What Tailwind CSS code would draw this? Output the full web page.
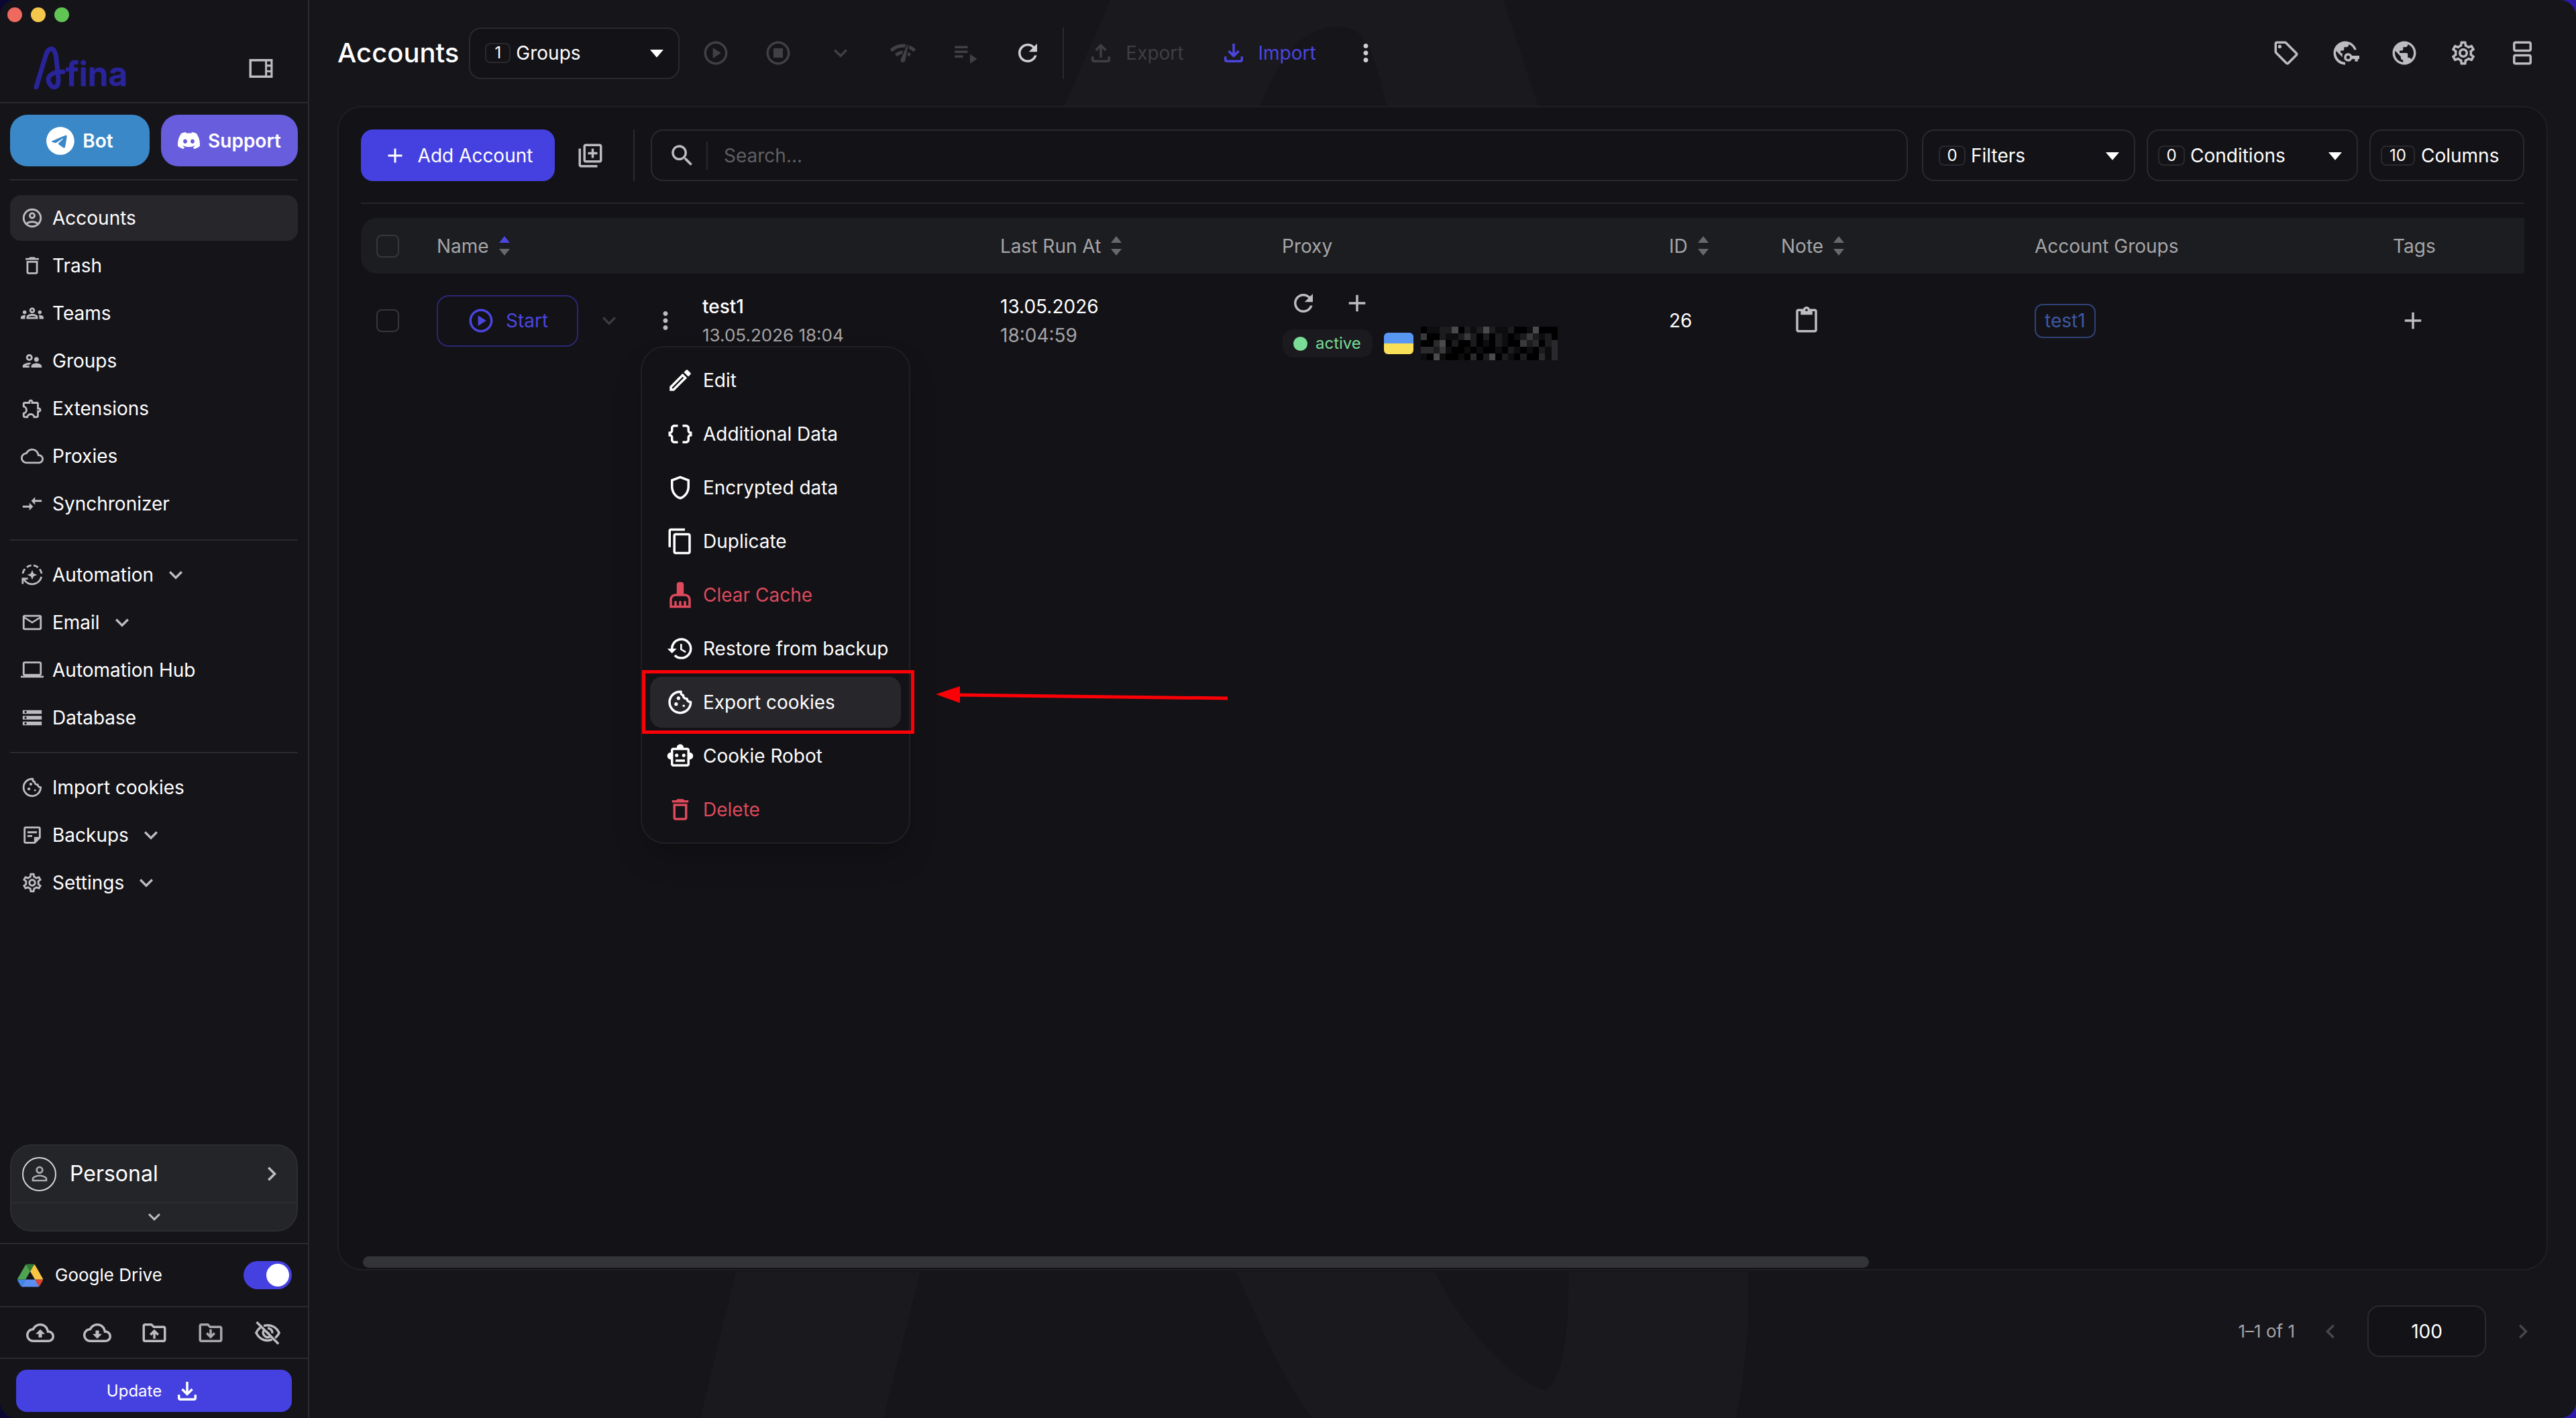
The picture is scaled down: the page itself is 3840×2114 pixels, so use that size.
<!DOCTYPE html>
<html lang="en">
<head>
    <meta charset="UTF-8">
    <meta name="viewport" content="width=device-width, initial-scale=1.0">
    <title>Afina - Accounts</title>
    <script src="https://cdn.jsdelivr.net/npm/@tailwindcss/browser@4"></script>
</head>
<body class="bg-linear-to-r from-[#0b0733] to-[#2c1ba8] font-['Inter',sans-serif] text-[28px] leading-[40px] text-white">

    <!-- Icon sprite -->
    <svg class="hidden" xmlns="http://www.w3.org/2000/svg">
        <symbol id="i-panel" viewBox="0 0 24 24"><path fill-rule="evenodd" d="M2 4h20v16H2zM4 6v12h11.500V6zM17.200 6v2.700h3V6zm0 4.500v3h3v-3zm0 4.800V18h3v-2.700z"/></symbol>
        <symbol id="i-telegram" viewBox="0 0 24 24"><path d="M12 2C6.480 2 2 6.480 2 12s4.480 10 10 10 10-4.480 10-10S17.520 2 12 2zm4.640 6.800c-.15 1.580-.8 5.420-1.130 7.190-.14.75-.42 1-.68 1.030-.58.05-1.020-.38-1.580-.75-.88-.58-1.380-.94-2.230-1.500-.99-.65-.35-1.010.22-1.590.15-.15 2.710-2.480 2.760-2.690.01-.03.01-.12-.05-.18-.06-.05-.14-.03-.21-.02-.09.02-1.490.95-4.220 2.790-.4.27-.76.41-1.080.4-.36-.01-1.040-.2-1.550-.37-.63-.2-1.120-.31-1.080-.66.02-.18.27-.36.74-.55 2.920-1.270 4.860-2.110 5.830-2.510 2.780-1.160 3.350-1.360 3.730-1.360.08 0 .27.02.39.12.1.08.13.19.14.27-.01.06.01.24 0 .38z"/></symbol>
        <symbol id="i-discord" viewBox="0 0 24 24"><path d="M20.317 4.370a19.791 19.791 0 0 0-4.885-1.515.074.074 0 0 0-.079.037c-.211.375-.445.865-.608 1.250-1.845-.276-3.680-.276-5.487 0-.164-.393-.406-.874-.618-1.250a.077.077 0 0 0-.079-.037 19.736 19.736 0 0 0-4.885 1.515.07.07 0 0 0-.032.028C.533 9.046-.319 13.580.099 18.058a.082.082 0 0 0 .031.056c2.053 1.508 4.041 2.423 5.993 3.029a.078.078 0 0 0 .084-.028c.462-.63.873-1.295 1.226-1.994a.076.076 0 0 0-.042-.106c-.653-.248-1.274-.55-1.872-.892a.077.077 0 0 1-.008-.128c.126-.094.252-.192.372-.291a.074.074 0 0 1 .078-.011c3.928 1.793 8.180 1.793 12.061 0a.074.074 0 0 1 .079.01c.12.099.246.198.373.292a.077.077 0 0 1-.007.128 12.299 12.299 0 0 1-1.873.891.077.077 0 0 0-.041.107c.36.698.772 1.363 1.225 1.993a.076.076 0 0 0 .084.029c1.961-.607 3.950-1.522 6.002-3.029a.077.077 0 0 0 .031-.055c.5-5.177-.838-9.674-3.549-13.660a.061.061 0 0 0-.031-.029zM8.020 15.331c-1.183 0-2.157-1.086-2.157-2.419s.956-2.419 2.157-2.419c1.211 0 2.176 1.095 2.157 2.419 0 1.333-.956 2.419-2.157 2.419zm7.975 0c-1.183 0-2.157-1.086-2.157-2.419s.955-2.419 2.157-2.419c1.211 0 2.176 1.095 2.157 2.419 0 1.333-.946 2.419-2.157 2.419z"/></symbol>
        <symbol id="i-account" viewBox="0 0 24 24"><g fill="none" stroke="currentColor" stroke-width="2"><circle cx="12" cy="12" r="9"/><circle cx="12" cy="9.500" r="2.500"/><path d="M5.600 18.200c3.800-2.900 9-2.900 12.800 0"/></g></symbol>
        <symbol id="i-trash" viewBox="0 0 24 24"><path d="M6 19c0 1.100.9 2 2 2h8c1.100 0 2-.9 2-2V7H6v12zM8 9h8v10H8V9zm7.500-5-1-1h-5l-1 1H5v2h14V4z"/></symbol>
        <symbol id="i-teams" viewBox="0 0 24 24"><path d="M4 13c1.100 0 2-.9 2-2s-.9-2-2-2-2 .9-2 2 .9 2 2 2zm1.130 1.100c-.37-.06-.74-.1-1.130-.1-.99 0-1.930.21-2.780.58C.48 14.900 0 15.620 0 16.430V18h4.500v-1.610c0-.83.23-1.610.63-2.290zM20 13c1.100 0 2-.9 2-2s-.9-2-2-2-2 .9-2 2 .9 2 2 2zm4 3.430c0-.81-.48-1.530-1.220-1.850-.85-.37-1.790-.58-2.780-.58-.39 0-.76.04-1.130.1.4.68.63 1.460.63 2.290V18H24v-1.570zm-7.760-2.780c-1.170-.52-2.610-.9-4.240-.9-1.630 0-3.070.39-4.240.9C6.680 14.130 6 15.210 6 16.390V18h12v-1.610c0-1.180-.68-2.260-1.760-2.740zM8.070 16c.09-.23.13-.39.91-.69.97-.38 1.990-.56 3.020-.56s2.050.18 3.020.56c.77.3.81.46.91.69H8.070zM12 8c.55 0 1 .45 1 1s-.45 1-1 1-1-.45-1-1 .45-1 1-1m0-2c-1.660 0-3 1.340-3 3s1.340 3 3 3 3-1.340 3-3-1.340-3-3-3z"/></symbol>
        <symbol id="i-groups" viewBox="0 0 24 24"><path d="M9 12c1.930 0 3.500-1.570 3.500-3.500S10.930 5 9 5 5.500 6.570 5.500 8.500 7.070 12 9 12zm0-5c.83 0 1.500.67 1.500 1.500S9.830 10 9 10s-1.500-.67-1.500-1.500S8.170 7 9 7zm.05 10H4.770c.99-.5 2.700-1 4.230-1 .11 0 .23.01.34.01.34-.73.93-1.330 1.640-1.810-.73-.13-1.420-.2-1.980-.2-2.340 0-7 1.170-7 3.500V19h7v-1.500c0-.17.02-.34.05-.5zm7.450-2.500c-1.840 0-5.500 1.010-5.500 3V19h11v-1.500c0-1.990-3.660-3-5.500-3zm1.210-1.820c.76-.43 1.290-1.240 1.290-2.180C19 9.120 17.880 8 16.500 8S14 9.120 14 10.500c0 .94.53 1.750 1.290 2.180.36.2.77.32 1.210.32s.85-.12 1.210-.32z"/></symbol>
        <symbol id="i-extension" viewBox="0 0 24 24"><path d="M10.500 4.500c.28 0 .5.22.5.5v2h6v6h2c.28 0 .5.22.5.5s-.22.5-.5.5h-2v6h-2.120c-.68-1.750-2.390-3-4.380-3s-3.700 1.250-4.380 3H4v-2.120c1.750-.68 3-2.390 3-4.380 0-1.990-1.240-3.700-2.990-4.380L4 7h6V5c0-.28.22-.5.5-.5m0-2C9.120 2.500 8 3.620 8 5H4c-1.100 0-1.990.9-1.990 2v3.800h.29c1.490 0 2.700 1.210 2.700 2.700s-1.210 2.700-2.700 2.700H2V20c0 1.100.9 2 2 2h3.800v-.3c0-1.490 1.210-2.700 2.700-2.700s2.700 1.210 2.700 2.700v.3H17c1.100 0 2-.9 2-2v-4c1.380 0 2.500-1.120 2.500-2.500S20.380 11 19 11V7c0-1.100-.9-2-2-2h-4c0-1.380-1.120-2.500-2.500-2.500z"/></symbol>
        <symbol id="i-cloud" viewBox="0 0 24 24"><path d="M19.350 10.040C18.670 6.590 15.640 4 12 4 9.110 4 6.600 5.640 5.350 8.040 2.340 8.360 0 10.910 0 14c0 3.310 2.690 6 6 6h13c2.760 0 5-2.240 5-5 0-2.640-2.050-4.780-4.650-4.960zM19 18H6c-2.210 0-4-1.790-4-4 0-2.050 1.530-3.760 3.560-3.970l1.070-.11.5-.95C8.080 7.140 9.940 6 12 6c2.620 0 4.880 1.860 5.390 4.430l.3 1.500 1.530.11c1.560.1 2.780 1.410 2.780 2.960 0 1.650-1.350 3-3 3z"/></symbol>
        <symbol id="i-sync" viewBox="0 0 24 24"><path d="M9.010 14H2v2h7.010v3L13 15l-3.990-4v3zm5.980-1v-3H22V8h-7.010V5L11 9l3.990 4z"/></symbol>
        <symbol id="i-automation" viewBox="0 0 24 24"><g fill="none" stroke="currentColor" stroke-width="2"><path d="M21.700 14A10 10 0 0 1 3.300 16.800M2.100 10.700A10 10 0 0 1 4.300 5.800M6.300 3.900A10 10 0 0 1 11 2M13.400 2A10 10 0 0 1 18.200 4.200M19.900 6A10 10 0 0 1 21.900 10.700"/><path d="M2 21.500V16h5.500"/></g><path d="m12 6.800 1.500 3.700 3.700 1.500-3.700 1.500L12 17.200l-1.500-3.700L6.800 12l3.700-1.500z"/></symbol>
        <symbol id="i-mail" viewBox="0 0 24 24"><path d="M22 6c0-1.100-.9-2-2-2H4c-1.100 0-2 .9-2 2v12c0 1.100.9 2 2 2h16c1.100 0 2-.9 2-2V6zm-2 0-8 5-8-5h16zm0 12H4V8l8 5 8-5v10z"/></symbol>
        <symbol id="i-laptop" viewBox="0 0 24 24"><path d="M20 18c1.100 0 1.990-.9 1.990-2L22 5c0-1.100-.9-2-2-2H4c-1.100 0-2 .9-2 2v11c0 1.100.9 2 2 2H0v2h24v-2h-4zM4 5h16v11H4V5z"/></symbol>
        <symbol id="i-storage" viewBox="0 0 24 24"><path d="M2 20h20v-4H2v4zm2-3h2v2H4v-2zM2 4v4h20V4H2zm4 3H4V5h2v2zm-4 7h20v-4H2v4zm2-3h2v2H4v-2z"/></symbol>
        <symbol id="i-cookie" viewBox="0 0 24 24"><path fill="none" stroke="currentColor" stroke-width="2" stroke-linejoin="round" d="M12.600 3a9 9 0 1 0 8.300 8.700c-1.700.1-3.100-.9-3.100-2.700-2 .2-3.300-1.100-3.200-2.900-1.500-.3-2.300-1.600-2-3.100z"/><circle cx="10.500" cy="8.500" r="1.500"/><circle cx="8.500" cy="13.500" r="1.500"/><circle cx="15" cy="15" r="1"/></symbol>
        <symbol id="i-backups" viewBox="0 0 24 24"><path fill-rule="evenodd" d="M5 3h14c1.100 0 2 .9 2 2v10l-6 6H5c-1.100 0-2-.9-2-2V5c0-1.100.9-2 2-2zm0 2v14h9v-5h5V5zM7 8h10v2H7zm0 4h5v2H7z"/></symbol>
        <symbol id="i-gear" viewBox="0 0 24 24"><path d="M19.430 12.980c.04-.32.07-.64.07-.98 0-.34-.03-.66-.07-.98l2.110-1.650c.19-.15.24-.42.12-.64l-2-3.460c-.09-.16-.26-.25-.44-.25-.06 0-.12.01-.17.03l-2.490 1c-.52-.4-1.080-.73-1.690-.98l-.38-2.650C14.460 2.180 14.250 2 14 2h-4c-.25 0-.46.18-.49.42l-.38 2.650c-.61.25-1.170.59-1.690.98l-2.490-1c-.06-.02-.12-.03-.18-.03-.17 0-.34.09-.43.25l-2 3.460c-.13.22-.07.49.12.64l2.110 1.650c-.04.32-.07.65-.07.98 0 .33.03.66.07.98l-2.110 1.650c-.19.15-.24.42-.12.64l2 3.460c.09.16.26.25.44.25.06 0 .12-.01.17-.03l2.490-1c.52.4 1.080.73 1.690.98l.38 2.650c.03.24.24.42.49.42h4c.25 0 .46-.18.49-.42l.38-2.650c.61-.25 1.170-.59 1.690-.98l2.490 1c.06.02.12.03.18.03.17 0 .34-.09.43-.25l2-3.460c.12-.22.07-.49-.12-.64l-2.110-1.650zm-1.980-1.710c.04.31.05.52.05.73 0 .21-.02.43-.05.73l-.14 1.130.89.7 1.080.84-.7 1.210-1.270-.51-1.040-.42-.9.68c-.43.32-.84.56-1.250.73l-1.060.43-.16 1.130-.2 1.350h-1.400l-.19-1.350-.16-1.130-1.060-.43c-.43-.18-.83-.41-1.230-.71l-.91-.7-1.060.43-1.270.51-.7-1.210 1.080-.84.89-.7-.14-1.130c-.03-.31-.05-.54-.05-.74s.02-.43.05-.73l.14-1.130-.89-.7-1.080-.84.7-1.210 1.270.51 1.040.42.9-.68c.43-.32.84-.56 1.250-.73l1.060-.43.16-1.130.2-1.350h1.390l.19 1.350.16 1.130 1.060.43c.43.18.83.41 1.230.71l.91.7 1.060-.43 1.270-.51.7 1.210-1.070.85-.89.7.14 1.130zM12 8c-2.210 0-4 1.790-4 4s1.790 4 4 4 4-1.790 4-4-1.790-4-4-4zm0 6c-1.100 0-2-.9-2-2s.9-2 2-2 2 .9 2 2-.9 2-2 2z"/></symbol>
        <symbol id="i-down" viewBox="0 0 24 24"><path d="M16.590 8.590 12 13.170 7.410 8.590 6 10l6 6 6-6z"/></symbol>
        <symbol id="i-right" viewBox="0 0 24 24"><path d="M10 6 8.590 7.410 13.170 12l-4.580 4.590L10 18l6-6z"/></symbol>
        <symbol id="i-left" viewBox="0 0 24 24"><path d="M15.410 7.410 14 6l-6 6 6 6 1.410-1.410L10.830 12z"/></symbol>
        <symbol id="i-person" viewBox="0 0 24 24"><path d="M12 5.900c1.160 0 2.100.94 2.100 2.100s-.94 2.100-2.100 2.100S9.900 9.160 9.900 8s.94-2.100 2.100-2.100m0 9c2.970 0 6.100 1.460 6.100 2.100v1.100H5.900V17c0-.64 3.130-2.100 6.100-2.100M12 4C9.790 4 8 5.790 8 8s1.790 4 4 4 4-1.790 4-4-1.790-4-4-4zm0 9c-2.670 0-8 1.340-8 4v3h16v-3c0-2.660-5.330-4-8-4z"/></symbol>
        <symbol id="i-drive" viewBox="0 0 87 78"><path fill="#4285e8" d="m6.600 66.850 3.850 6.650c.8 1.400 1.950 2.500 3.300 3.300l13.750-23.800h-27.500c0 1.550.4 3.100 1.200 4.500z"/><path fill="#4fa352" d="m43.650 25-13.750-23.800c-1.350.8-2.500 1.900-3.300 3.300l-25.400 44a9.060 9.060 0 0 0-1.200 4.500h27.500z"/><path fill="#d9432f" d="m73.550 76.800c1.350-.8 2.500-1.900 3.300-3.300l1.600-2.750 7.650-13.250c.8-1.400 1.200-2.950 1.200-4.500h-27.500l5.850 11.500z"/><path fill="#2f7d36" d="m43.650 25 13.750-23.800c-1.350-.8-2.900-1.200-4.500-1.200h-18.500c-1.600 0-3.150.45-4.500 1.200z"/><path fill="#5b8df0" d="m59.800 53h-32.300l-13.750 23.800c1.350.8 2.900 1.200 4.500 1.200h50.800c1.600 0 3.150-.45 4.500-1.200z"/><path fill="#f7c544" d="m73.400 26.500-12.700-22c-.8-1.400-1.950-2.500-3.300-3.300l-13.750 23.800 16.150 28h27.450c0-1.550-.4-3.100-1.200-4.500z"/></symbol>
        <symbol id="i-arrow-up" viewBox="0 0 24 24"><path d="M8 13h2.550v3h2.900v-3H16l-4-4z"/></symbol>
        <symbol id="i-arrow-down" viewBox="0 0 24 24"><path d="M13.450 10h-2.900v3H8l4 4 4-4h-2.550z"/></symbol>
        <symbol id="i-folder" viewBox="0 0 24 24"><path d="M20 6h-8l-2-2H4c-1.100 0-1.990.9-1.990 2L2 18c0 1.100.9 2 2 2h16c1.100 0 2-.9 2-2V8c0-1.100-.9-2-2-2zm0 12H4V6h5.170l2 2H20v10z"/></symbol>
        <symbol id="i-folder-up" viewBox="0 0 24 24"><use href="#i-folder"/><path d="m8 13 1.410 1.410L11 12.840V17h2v-4.160l1.590 1.580L16 13l-4-4z"/></symbol>
        <symbol id="i-folder-down" viewBox="0 0 24 24"><use href="#i-folder"/><path d="m16 13-1.410-1.410L13 13.160V9h-2v4.160l-1.590-1.580L8 13l4 4z"/></symbol>
        <symbol id="i-eye-off" viewBox="0 0 24 24"><g fill="none" stroke="currentColor" stroke-width="2"><path d="M18.400 16.300c1.400-1.100 2.600-2.600 3.400-4.300C20 8.200 16.300 5.500 12 5.500c-1.200 0-2.300.2-3.400.6M5.900 7.400C4.300 8.500 3 10.100 2.200 12 4 15.800 7.700 18.500 12 18.500c1.300 0 2.600-.3 3.800-.7"/><path d="M12 8a4 4 0 0 1 4 4.300M8.600 10a4 4 0 0 0 5.300 5.400M11 11l2.500 2.500"/><path d="m2.600 2.800 18.600 18.600"/></g></symbol>
        <symbol id="i-import" viewBox="0 0 24 24"><path d="M18 15v3H6v-3H4v3c0 1.100.9 2 2 2h12c1.100 0 2-.9 2-2v-3h-2zm-1-4-1.410-1.410L13 12.170V4h-2v8.170L8.410 9.590 7 11l5 5 5-5z"/></symbol>
        <symbol id="i-export" viewBox="0 0 24 24"><path d="M18 15v3H6v-3H4v3c0 1.100.9 2 2 2h12c1.100 0 2-.9 2-2v-3h-2zM7 9l1.410 1.410L11 7.830V16h2V7.830l2.590 2.580L17 9l-5-5-5 5z"/></symbol>
        <symbol id="i-caret" viewBox="0 0 24 24"><path d="M6 9h12l-6 7z"/></symbol>
        <symbol id="i-play" viewBox="0 0 24 24"><path d="M12 2C6.480 2 2 6.480 2 12s4.480 10 10 10 10-4.480 10-10S17.520 2 12 2zm0 18c-4.410 0-8-3.590-8-8s3.590-8 8-8 8 3.590 8 8-3.590 8-8 8zm-2.500-3.500 7-4.500-7-4.500z"/></symbol>
        <symbol id="i-stop" viewBox="0 0 24 24"><path d="M12 2C6.480 2 2 6.480 2 12s4.480 10 10 10 10-4.480 10-10S17.520 2 12 2zm0 18c-4.410 0-8-3.590-8-8s3.590-8 8-8 8 3.590 8 8-3.590 8-8 8zm4-4H8V8h8z"/></symbol>
        <symbol id="i-netcheck" viewBox="0 0 24 24"><path d="M15.900 5c-.17 0-.32.09-.41.23l-.07.15-5.180 11.650c-.16.29-.26.61-.26.96 0 1.110.9 2.010 2.010 2.010.96 0 1.770-.68 1.960-1.590l.01-.03L16.400 5.500c0-.28-.22-.5-.5-.5zM1 9l2 2c2.880-2.880 6.790-4.080 10.530-3.620l1.190-2.680C9.890 3.840 4.740 5.270 1 9zm20 2 2-2c-1.640-1.640-3.550-2.820-5.590-3.570l-.53 2.820c1.500.62 2.900 1.530 4.120 2.750zm-4 4 2-2c-.8-.8-1.700-1.420-2.660-1.890l-.55 2.920c.42.27.83.59 1.210.97zM5 13l2 2c1.130-1.130 2.560-1.790 4.030-2l1.280-2.880c-2.630-.08-5.300.87-7.310 2.880z"/></symbol>
        <symbol id="i-playlist" viewBox="0 0 24 24"><path d="M3 10h11v2H3zm0-4h11v2H3zm0 8h7v2H3zm13-1v8l6-4z"/></symbol>
        <symbol id="i-refresh" viewBox="0 0 24 24"><path d="M17.650 6.350C16.200 4.900 14.210 4 12 4c-4.420 0-7.990 3.580-7.990 8s3.570 8 7.990 8c3.730 0 6.840-2.550 7.730-6h-2.080c-.82 2.330-3.040 4-5.650 4-3.310 0-6-2.690-6-6s2.690-6 6-6c1.660 0 3.140.69 4.220 1.780L13 11h7V4z"/></symbol>
        <symbol id="i-more" viewBox="0 0 24 24"><path d="M12 8c1.100 0 2-.9 2-2s-.9-2-2-2-2 .9-2 2 .9 2 2 2zm0 2c-1.100 0-2 .9-2 2s.9 2 2 2 2-.9 2-2-.9-2-2-2zm0 6c-1.100 0-2 .9-2 2s.9 2 2 2 2-.9 2-2-.9-2-2-2z"/></symbol>
        <symbol id="i-tag" viewBox="0 0 24 24"><path d="m21.410 11.580-9-9C12.050 2.220 11.550 2 11 2H4c-1.100 0-2 .9-2 2v7c0 .55.22 1.050.59 1.420l9 9c.36.36.86.58 1.410.58s1.050-.22 1.410-.59l7-7c.37-.36.59-.86.59-1.410s-.23-1.060-.59-1.420zM13 20.010 4 11V4h7v-.01l9 9-7 7.020z"/><circle cx="6.500" cy="6.500" r="1.500"/></symbol>
        <symbol id="i-globe" viewBox="0 0 24 24"><path d="M12 2C6.480 2 2 6.480 2 12s4.480 10 10 10 10-4.480 10-10S17.520 2 12 2zm-1 17.930c-3.950-.49-7-3.850-7-7.930 0-.62.08-1.210.21-1.790L9 15v1c0 1.100.9 2 2 2v1.930zm6.900-2.540c-.26-.81-1-1.390-1.900-1.390h-1v-3c0-.55-.45-1-1-1H8v-2h2c.55 0 1-.45 1-1V7h2c1.100 0 2-.9 2-2v-.41c2.930 1.190 5 4.060 5 7.410 0 2.080-.8 3.970-2.100 5.390z"/></symbol>
        <symbol id="i-globe-key" viewBox="0 0 24 24"><path d="M11 22C5.900 21.500 2 17.200 2 12 2 6.480 6.480 2 12 2c4.500 0 8.300 3 9.600 7.300h-2.100A8 8 0 0 0 15 4.600V5c0 1.100-.9 2-2 2h-2v2c0 .55-.45 1-1 1H8v2h1.500v3.500L4.200 10.200C3.300 15 6.500 19.400 12 20v2z"/><path fill-rule="evenodd" d="M14.500 12.200a3.500 3.500 0 0 1 3.200 2.100H24v2.800h-1.200v2h-2.600v-2h-2.500a3.500 3.500 0 1 1-3.200-4.900zm0 2a1.500 1.500 0 1 0 0 3 1.500 1.500 0 0 0 0-3z"/></symbol>
        <symbol id="i-rows" viewBox="0 0 24 24"><path fill-rule="evenodd" d="M6 2h12c1.100 0 2 .9 2 2v5c0 1.100-.9 2-2 2H6c-1.100 0-2-.9-2-2V4c0-1.100.9-2 2-2zm0 2v5h12V4zm0 9h12c1.100 0 2 .9 2 2v5c0 1.100-.9 2-2 2H6c-1.100 0-2-.9-2-2v-5c0-1.100.9-2 2-2zm0 2v5h12v-5z"/></symbol>
        <symbol id="i-plus" viewBox="0 0 24 24"><path d="M19 13h-6v6h-2v-6H5v-2h6V5h2v6h6z"/></symbol>
        <symbol id="i-library" viewBox="0 0 24 24"><path d="M4 6H2v14c0 1.100.9 2 2 2h14v-2H4V6zm16-4H8c-1.100 0-2 .9-2 2v12c0 1.100.9 2 2 2h12c1.100 0 2-.9 2-2V4c0-1.100-.9-2-2-2zm0 14H8V4h12v12zm-7-2h2v-3h3V9h-3V6h-2v3h-3v2h3z"/></symbol>
        <symbol id="i-search" viewBox="0 0 24 24"><path d="M15.500 14h-.79l-.28-.27C15.410 12.590 16 11.110 16 9.500 16 5.910 13.090 3 9.500 3S3 5.910 3 9.500 5.910 16 9.500 16c1.610 0 3.090-.59 4.230-1.570l.27.28v.79l5 4.990L20.490 19zm-6 0C7.010 14 5 11.990 5 9.500S7.010 5 9.500 5 14 7.010 14 9.500 11.990 14 9.500 14z"/></symbol>
        <symbol id="i-clipboard" viewBox="0 0 24 24"><path d="M19 2h-4.180C14.400.84 13.300 0 12 0S9.600.84 9.180 2H5c-1.100 0-2 .9-2 2v16c0 1.100.9 2 2 2h14c1.100 0 2-.9 2-2V4c0-1.100-.9-2-2-2zm-7 0c.55 0 1 .45 1 1s-.45 1-1 1-1-.45-1-1 .45-1 1-1zm7 18H5V4h2v3h10V4h2v16z"/></symbol>
        <symbol id="i-edit" viewBox="0 0 24 24"><path d="m14.060 9.020.92.92L5.920 19H5v-.92l9.060-9.060M17.660 3c-.25 0-.51.1-.7.29l-1.830 1.830 3.750 3.750 1.830-1.830c.39-.39.39-1.020 0-1.410l-2.340-2.340c-.2-.2-.45-.29-.71-.29zm-3.600 3.190L3 17.250V21h3.750L17.810 9.940l-3.750-3.750z"/></symbol>
        <symbol id="i-braces" viewBox="0 0 24 24"><path d="M4 7v2c0 .55-.45 1-1 1H2v4h1c.55 0 1 .45 1 1v2c0 1.650 1.350 3 3 3h3v-2H7c-.55 0-1-.45-1-1v-2c0-1.300-.84-2.420-2-2.830v-.34C5.160 11.420 6 10.300 6 9V7c0-.55.45-1 1-1h3V4H7C5.350 4 4 5.350 4 7zm17 3c-.55 0-1-.45-1-1V7c0-1.650-1.350-3-3-3h-3v2h3c.55 0 1 .45 1 1v2c0 1.300.84 2.420 2 2.830v.34c-1.160.41-2 1.520-2 2.830v2c0 .55-.45 1-1 1h-3v2h3c1.650 0 3-1.350 3-3v-2c0-.55.45-1 1-1h1v-4h-1z"/></symbol>
        <symbol id="i-shield" viewBox="0 0 24 24"><path d="M12 2 4 5v6.090c0 5.050 3.410 9.760 8 10.910 4.590-1.150 8-5.860 8-10.910V5l-8-3zm6 9.090c0 4-2.550 7.700-6 8.830-3.450-1.130-6-4.820-6-8.830v-4.700l6-2.250 6 2.250v4.700z"/></symbol>
        <symbol id="i-copy" viewBox="0 0 24 24"><path d="M16 1H4c-1.100 0-2 .9-2 2v14h2V3h12V1zm3 4H8c-1.100 0-2 .9-2 2v14c0 1.100.9 2 2 2h11c1.100 0 2-.9 2-2V7c0-1.100-.9-2-2-2zm0 16H8V7h11v14z"/></symbol>
        <symbol id="i-clean" viewBox="0 0 24 24"><path d="M16 11h-1V3c0-1.100-.9-2-2-2h-2c-1.100 0-2 .9-2 2v8H8c-2.760 0-5 2.240-5 5v7h18v-7c0-2.760-2.240-5-5-5zm3 10h-2v-3c0-.55-.45-1-1-1s-1 .45-1 1v3h-2v-3c0-.55-.45-1-1-1s-1 .45-1 1v3H9v-3c0-.55-.45-1-1-1s-1 .45-1 1v3H5v-5c0-1.650 1.350-3 3-3h8c1.650 0 3 1.350 3 3v5z"/></symbol>
        <symbol id="i-restore" viewBox="0 0 24 24"><path d="M13 3c-4.970 0-9 4.030-9 9H1l3.890 3.890.07.14L9 12H6c0-3.870 3.130-7 7-7s7 3.130 7 7-3.130 7-7 7c-1.930 0-3.680-.79-4.940-2.060l-1.420 1.420C8.270 19.990 10.510 21 13 21c4.970 0 9-4.030 9-9s-4.030-9-9-9zm-1 5v5l4.280 2.540.72-1.210-3.500-2.080V8z"/></symbol>
        <symbol id="i-robot" viewBox="0 0 24 24"><path d="M20 9V7c0-1.100-.9-2-2-2h-3c0-1.660-1.340-3-3-3S9 3.340 9 5H6c-1.100 0-2 .9-2 2v2c-1.660 0-3 1.340-3 3s1.340 3 3 3v4c0 1.100.9 2 2 2h12c1.100 0 2-.9 2-2v-4c1.660 0 3-1.340 3-3s-1.340-3-3-3zm-2 10H6V7h12v12zm-9-6c-.83 0-1.500-.67-1.500-1.500S8.170 10 9 10s1.500.67 1.500 1.500S9.830 13 9 13zm7.500-1.500c0 .83-.67 1.500-1.500 1.500s-1.500-.67-1.500-1.500.67-1.500 1.500-1.500 1.500.67 1.500 1.500zM8 15h8v2H8v-2z"/></symbol>
    </svg>

    <div class="flex min-h-screen overflow-hidden rounded-[24px] bg-[#161519]">

        <!-- Sidebar -->
        <aside class="flex w-[461px] shrink-0 flex-col border-r-2 border-[#2b2b2f] bg-[#151419]">
            <div class="flex gap-[13px] px-[11px] pt-[11px]">
                <span class="size-[22px] rounded-full bg-[#ee6a5f]"></span>
                <span class="size-[22px] rounded-full bg-[#f5c84c]"></span>
                <span class="size-[22px] rounded-full bg-[#61c554]"></span>
            </div>
            <div class="flex h-[121px] items-center justify-between border-b-2 border-[#2b2b2f] px-[49px] pt-[18px]">
                <a href="#" aria-label="Afina">
                    <svg class="h-[70px] w-[146px]" viewBox="0 0 146 70">
                        <path d="M5 63C10 46 14 32 18.500 18.500 22 2 32 2 34.500 16.500L38 50c1 15-9 17-14 6-4-9 4-16 21-16" fill="none" stroke="#29249a" stroke-width="7" stroke-linecap="round"/>
                        <text x="49" y="61" font-family="Inter" font-size="50" font-weight="600" fill="#29249a" stroke="#29249a" stroke-width="1" stroke-linejoin="round">fina</text>
                    </svg>
                </a>
                <button aria-label="Toggle sidebar"><svg class="size-[42px] fill-[#bdbdc0]"><use href="#i-panel"/></svg></button>
            </div>

            <div class="flex gap-[17px] px-[15px] pt-[17px] font-semibold">
                <a href="#" class="flex h-[77px] flex-1 items-center justify-center gap-[8px] rounded-[26px] bg-[#3b88c8] pr-[4px]">
                    <svg class="size-[50px] fill-white"><use href="#i-telegram"/></svg>Bot
                </a>
                <a href="#" class="flex h-[77px] flex-1 items-center justify-center gap-[12px] rounded-[26px] bg-[#675ddd]">
                    <svg class="size-[33px] fill-white"><use href="#i-discord"/></svg>Support
                </a>
            </div>

            <nav class="mt-[19px] flex flex-col px-[15px]">
                <div class="flex flex-col gap-[3px] border-t-2 border-[#2b2b2f] pt-[22px] pb-[19px]">
                    <a href="#" class="flex h-[68px] items-center gap-[13px] rounded-[16px] bg-[#27262b] px-[16px]"><svg class="size-[34px] fill-[#bdbdc0] text-[#bdbdc0]"><use href="#i-account"/></svg>Accounts</a>
                    <a href="#" class="flex h-[68px] items-center gap-[13px] rounded-[16px] px-[16px]"><svg class="size-[34px] fill-[#bdbdc0]"><use href="#i-trash"/></svg>Trash</a>
                    <a href="#" class="flex h-[68px] items-center gap-[13px] rounded-[16px] px-[16px]"><svg class="size-[34px] fill-[#bdbdc0]"><use href="#i-teams"/></svg>Teams</a>
                    <a href="#" class="flex h-[68px] items-center gap-[13px] rounded-[16px] px-[16px]"><svg class="size-[34px] fill-[#bdbdc0]"><use href="#i-groups"/></svg>Groups</a>
                    <a href="#" class="flex h-[68px] items-center gap-[13px] rounded-[16px] px-[16px]"><svg class="size-[34px] fill-[#bdbdc0]"><use href="#i-extension"/></svg>Extensions</a>
                    <a href="#" class="flex h-[68px] items-center gap-[13px] rounded-[16px] px-[16px]"><svg class="size-[34px] fill-[#bdbdc0]"><use href="#i-cloud"/></svg>Proxies</a>
                    <a href="#" class="flex h-[68px] items-center gap-[13px] rounded-[16px] px-[16px]"><svg class="size-[34px] fill-[#bdbdc0]"><use href="#i-sync"/></svg>Synchronizer</a>
                </div>
                <div class="flex flex-col gap-[3px] border-t-2 border-[#2b2b2f] py-[17px]">
                    <button class="flex h-[68px] items-center gap-[13px] px-[16px]"><svg class="size-[34px] fill-[#bdbdc0] text-[#bdbdc0]"><use href="#i-automation"/></svg>Automation<svg class="size-[40px] fill-[#bdbdc0]"><use href="#i-down"/></svg></button>
                    <button class="flex h-[68px] items-center gap-[13px] px-[16px]"><svg class="size-[34px] fill-[#bdbdc0]"><use href="#i-mail"/></svg>Email<svg class="size-[40px] fill-[#bdbdc0]"><use href="#i-down"/></svg></button>
                    <a href="#" class="flex h-[68px] items-center gap-[13px] px-[16px]"><svg class="size-[34px] fill-[#bdbdc0]"><use href="#i-laptop"/></svg>Automation Hub</a>
                    <a href="#" class="flex h-[68px] items-center gap-[13px] px-[16px]"><svg class="size-[34px] fill-[#bdbdc0]"><use href="#i-storage"/></svg>Database</a>
                </div>
                <div class="flex flex-col gap-[3px] border-t-2 border-[#2b2b2f] py-[17px]">
                    <a href="#" class="flex h-[68px] items-center gap-[13px] px-[16px]"><svg class="size-[34px] fill-[#bdbdc0] text-[#bdbdc0]"><use href="#i-cookie"/></svg>Import cookies</a>
                    <button class="flex h-[68px] items-center gap-[13px] px-[16px]"><svg class="size-[34px] fill-[#bdbdc0]"><use href="#i-backups"/></svg>Backups<svg class="size-[40px] fill-[#bdbdc0]"><use href="#i-down"/></svg></button>
                    <button class="flex h-[68px] items-center gap-[13px] px-[16px]"><svg class="size-[34px] fill-[#bdbdc0]"><use href="#i-gear"/></svg>Settings<svg class="size-[40px] fill-[#bdbdc0]"><use href="#i-down"/></svg></button>
                </div>
            </nav>

            <div class="mt-auto">
                <div class="mx-[15px] mb-[17px] rounded-[32px] border-2 border-[#2d2d31] bg-[#242529]">
                    <button class="flex h-[84px] w-full items-center px-[16px] text-[32px]">
                        <span class="flex size-[51px] items-center justify-center rounded-full border-2 border-[#d5d5d8]"><svg class="size-[34px] fill-[#aaaaae]"><use href="#i-person"/></svg></span>
                        <span class="ml-[20px]">Personal</span>
                        <svg class="ml-auto size-[42px] fill-[#bdbdc0]"><use href="#i-right"/></svg>
                    </button>
                    <button class="flex h-[42px] w-full items-center justify-center border-t-2 border-[#2d2d31]" aria-label="Expand"><svg class="size-[36px] fill-[#bdbdc0]"><use href="#i-down"/></svg></button>
                </div>
                <div class="flex h-[94px] items-center border-t-2 border-[#2b2b2f] pr-[24px] pl-[26px]">
                    <svg class="h-[35px] w-[38px]"><use href="#i-drive"/></svg>
                    <label for="drive" class="ml-[18px] text-[26px]">Google Drive</label>
                    <input id="drive" type="checkbox" role="switch" checked class="relative ml-auto h-[42px] w-[72px] appearance-none rounded-full bg-[#4540e0] before:absolute before:top-[4px] before:right-[4px] before:size-[34px] before:rounded-full before:bg-white">
                </div>
                <div class="flex h-[77px] items-center justify-between border-t-2 border-[#2b2b2f] px-[39px]">
                    <button aria-label="Upload to cloud"><svg class="size-[42px] fill-[#bdbdc0]"><use href="#i-cloud"/><use href="#i-arrow-up"/></svg></button>
                    <button aria-label="Download from cloud"><svg class="size-[42px] fill-[#bdbdc0]"><use href="#i-cloud"/><use href="#i-arrow-down"/></svg></button>
                    <button aria-label="Export folder"><svg class="size-[42px] fill-[#bdbdc0]"><use href="#i-folder-up"/></svg></button>
                    <button aria-label="Import folder"><svg class="size-[42px] fill-[#a8a8ac]"><use href="#i-folder-down"/></svg></button>
                    <button aria-label="Hide"><svg class="size-[42px] fill-[#bdbdc0] text-[#bdbdc0]"><use href="#i-eye-off"/></svg></button>
                </div>
                <div class="border-t-2 border-[#2b2b2f] px-[24px] pt-[16px] pb-[9px]">
                    <button class="flex h-[63px] w-full items-center justify-center gap-[17px] rounded-[16px] bg-[#4540e0] text-[24px]">Update<svg class="size-[42px] fill-white"><use href="#i-import"/></svg></button>
                </div>
            </div>
        </aside>

        <!-- Main -->
        <main class="relative isolate flex min-w-0 flex-1 flex-col">
            <svg class="absolute inset-0 -z-10 h-full w-full" viewBox="461 0 3379 2114" preserveAspectRatio="none" fill="#1a191d">
                <path d="M1587 158 1655 0h586l52 158h-226c-18-80-32-118-69-118-58 0-88 40-120 118z"/>
                <path d="M1097 1896h275l-55 218h-273z"/>
                <path d="M1842 1896 1882 1983c22 50 50 100 75 131h631c14-70 21-150 18-218h-268c2 80-8 176-39 176-55-20-130-110-160-176z"/>
            </svg>

            <header class="flex h-[158px] items-center pr-[36px] pl-[42px]">
                <h1 class="text-[40px] leading-[48px] font-medium">Accounts</h1>
                <div class="relative ml-[15px] flex h-[77px] w-[314px] items-center rounded-[18px] border-2 border-[#2a2a2e] bg-[#131216] pl-[22px]">
                    <span class="flex h-[30px] w-[38px] items-center justify-center rounded-[8px] border-2 border-[#2a2a2e] text-[24px]">1</span>
                    <select aria-label="Groups" class="h-full flex-1 appearance-none bg-transparent pl-[8px] outline-none"><option>Groups</option></select>
                    <svg class="pointer-events-none absolute right-[12px] size-[40px] fill-white"><use href="#i-caret"/></svg>
                </div>
                <div class="ml-[7px] flex items-center">
                    <button disabled aria-label="Start selected" class="flex w-[93px] justify-center"><svg class="size-[42px] fill-[#414145]"><use href="#i-play"/></svg></button>
                    <button disabled aria-label="Stop selected" class="flex w-[93px] justify-center"><svg class="size-[42px] fill-[#414145]"><use href="#i-stop"/></svg></button>
                    <button disabled aria-label="More start options" class="flex w-[93px] justify-center"><svg class="size-[40px] fill-[#414145]"><use href="#i-down"/></svg></button>
                    <button disabled aria-label="Check proxies" class="flex w-[93px] justify-center"><svg class="size-[42px] fill-[#414145]"><use href="#i-netcheck"/></svg></button>
                    <button disabled aria-label="Run script" class="flex w-[93px] justify-center"><svg class="size-[42px] fill-[#414145]"><use href="#i-playlist"/></svg></button>
                    <button aria-label="Refresh" class="flex w-[93px] justify-center"><svg class="size-[42px] fill-[#cfcfd2]"><use href="#i-refresh"/></svg></button>
                </div>
                <div class="ml-[6px] flex h-[77px] items-center gap-[53px] border-l-2 border-[#2a2a2e] pl-[34px]">
                    <button disabled class="flex items-center gap-[16px] text-[#3f3f43]"><svg class="size-[42px] fill-[#3f3f43]"><use href="#i-export"/></svg>Export</button>
                    <button class="flex items-center gap-[16px] text-[#4b46e0]"><svg class="size-[42px] fill-[#4b46e0]"><use href="#i-import"/></svg>Import</button>
                    <button aria-label="More"><svg class="size-[42px] fill-[#cfcfd2]"><use href="#i-more"/></svg></button>
                </div>
                <div class="ml-auto flex items-center">
                    <button aria-label="Tags" class="flex w-[88px] justify-center"><svg class="size-[42px] fill-[#bdbdc0]"><use href="#i-tag"/></svg></button>
                    <button aria-label="Proxy settings" class="flex w-[88px] justify-center"><svg class="size-[42px] fill-[#bdbdc0]"><use href="#i-globe-key"/></svg></button>
                    <button aria-label="Language" class="flex w-[88px] justify-center"><svg class="size-[42px] fill-[#bdbdc0]"><use href="#i-globe"/></svg></button>
                    <button aria-label="Settings" class="flex w-[88px] justify-center"><svg class="size-[42px] fill-[#bdbdc0]"><use href="#i-gear"/></svg></button>
                    <button aria-label="Row density" class="flex w-[88px] justify-center"><svg class="size-[42px] fill-[#bdbdc0]"><use href="#i-rows"/></svg></button>
                </div>
            </header>

            <section class="mx-[42px] flex flex-1 flex-col rounded-[36px] border-2 border-[#201f24] bg-[#131216] px-[33px] pt-[33px]">
                <div class="flex h-[77px] items-stretch">
                    <button class="flex w-[289px] items-center justify-center gap-[16px] rounded-[18px] bg-[#4540e0]"><svg class="size-[36px] fill-white"><use href="#i-plus"/></svg>Add Account</button>
                    <button aria-label="Add multiple" class="ml-[15px] flex w-[76px] items-center justify-center"><svg class="size-[42px] fill-[#bdbdc0]"><use href="#i-library"/></svg></button>
                    <span class="ml-[26px] w-[2px] bg-[#2a2a2e]"></span>
                    <div class="ml-[24px] flex flex-1 items-center rounded-[18px] border-2 border-[#2a2a2e] pl-[24px]">
                        <svg class="size-[42px] fill-[#bdbdc0]"><use href="#i-search"/></svg>
                        <span class="ml-[15px] h-[42px] w-[2px] bg-[#2a2a2e]"></span>
                        <input type="text" aria-label="Search" placeholder="Search..." class="h-full flex-1 bg-transparent pl-[24px] outline-none placeholder:text-[#5f5f63]">
                    </div>
                    <div class="relative ml-[21px] flex w-[318px] items-center rounded-[18px] border-2 border-[#2a2a2e] pl-[23px]">
                        <span class="flex h-[30px] w-[40px] items-center justify-center rounded-[8px] border-2 border-[#2a2a2e] text-[24px]">0</span>
                        <select aria-label="Filters" class="h-full flex-1 appearance-none bg-transparent pl-[8px] outline-none"><option>Filters</option></select>
                        <svg class="pointer-events-none absolute right-[12px] size-[40px] fill-white"><use href="#i-caret"/></svg>
                    </div>
                    <div class="relative ml-[17px] flex w-[315px] items-center rounded-[18px] border-2 border-[#2a2a2e] pl-[15px]">
                        <span class="flex h-[30px] w-[40px] items-center justify-center rounded-[8px] border-2 border-[#2a2a2e] text-[24px]">0</span>
                        <select aria-label="Conditions" class="h-full flex-1 appearance-none bg-transparent pl-[8px] outline-none"><option>Conditions</option></select>
                        <svg class="pointer-events-none absolute right-[12px] size-[40px] fill-white"><use href="#i-caret"/></svg>
                    </div>
                    <button class="ml-[17px] flex w-[231px] items-center rounded-[18px] border-2 border-[#2a2a2e] pl-[15px]">
                        <span class="mr-[9px] flex h-[30px] w-[51px] items-center justify-center rounded-[8px] border-2 border-[#2a2a2e] text-[24px]">10</span>Columns
                    </button>
                </div>

                <div class="mt-[32px] flex-1 border-t-2 border-[#26262a] pt-[21px]">
                    <table class="w-full table-fixed text-left">
                        <colgroup>
                            <col class="w-[98px]"><col class="w-[840px]"><col class="w-[420px]"><col class="w-[577px]"><col class="w-[167px]"><col class="w-[378px]"><col class="w-[534px]"><col>
                        </colgroup>
                        <thead class="text-[#a5a5a8]">
                            <tr class="h-[83px]">
                                <th class="rounded-l-[24px] bg-[#1c1d20] pl-[23px]"><input type="checkbox" aria-label="Select all" class="block size-[34px] appearance-none rounded-[8px] border-2 border-[#37373b]"></th>
                                <th class="bg-[#1c1d20] px-[15px] font-normal"><span class="flex items-center gap-[14px]">Name <svg class="h-[30px] w-[18px]" viewBox="0 0 18 30"><path fill="#4b46e0" d="M1 10h16L9 0z"/><path fill="#68686c" d="M1 19h16l-8 10z"/></svg></span></th>
                                <th class="bg-[#1c1d20] px-[15px] font-normal"><span class="flex items-center gap-[14px]">Last Run At <svg class="h-[30px] w-[18px] fill-[#68686c]" viewBox="0 0 18 30"><path d="M1 10h16L9 0zM1 19h16l-8 10z"/></svg></span></th>
                                <th class="bg-[#1c1d20] px-[15px] font-normal">Proxy</th>
                                <th class="bg-[#1c1d20] px-[15px] font-normal"><span class="flex items-center gap-[14px]">ID <svg class="h-[30px] w-[18px] fill-[#68686c]" viewBox="0 0 18 30"><path d="M1 10h16L9 0zM1 19h16l-8 10z"/></svg></span></th>
                                <th class="bg-[#1c1d20] px-[15px] font-normal"><span class="flex items-center gap-[14px]">Note <svg class="h-[30px] w-[18px] fill-[#68686c]" viewBox="0 0 18 30"><path d="M1 10h16L9 0zM1 19h16l-8 10z"/></svg></span></th>
                                <th class="bg-[#1c1d20] px-[15px] font-normal">Account Groups</th>
                                <th class="bg-[#1c1d20] px-[15px] font-normal">Tags</th>
                            </tr>
                        </thead>
                        <tbody>
                            <tr class="h-[140px]">
                                <td class="pl-[23px]"><input type="checkbox" aria-label="Select test1" class="block size-[34px] appearance-none rounded-[8px] border-2 border-[#37373b]"></td>
                                <td class="px-[15px]">
                                    <div class="relative flex items-center">
                                        <button class="flex h-[77px] w-[211px] items-center justify-center gap-[16px] rounded-[18px] border-2 border-[#2b2775] text-[#4b46e0]"><svg class="size-[42px] fill-[#4b46e0]"><use href="#i-play"/></svg>Start</button>
                                        <button aria-label="Start options" class="ml-[26px]"><svg class="size-[40px] fill-[#3c3c40]"><use href="#i-down"/></svg></button>
                                        <button aria-label="Account menu" class="ml-[43px]"><svg class="size-[42px] fill-[#bdbdc0]"><use href="#i-more"/></svg></button>
                                        <div class="ml-[34px]">
                                            <div class="font-medium">test1</div>
                                            <div class="mt-[3px] text-[26px] text-[#a5a5a8]">13.05.2026 18:04</div>
                                        </div>

                                        <!-- Account context menu -->
                                        <ul class="absolute top-[79px] left-[304px] z-10 flex w-[402px] flex-col gap-[4px] rounded-[36px] border-2 border-[#201f24] bg-[#131216] px-[12px] py-[11px] whitespace-nowrap shadow-2xl">
                                            <li><button class="flex h-[76px] w-full items-center gap-[13px] pl-[24px]"><svg class="size-[42px] fill-white"><use href="#i-edit"/></svg>Edit</button></li>
                                            <li><button class="flex h-[76px] w-full items-center gap-[13px] pl-[24px]"><svg class="size-[42px] fill-white"><use href="#i-braces"/></svg>Additional Data</button></li>
                                            <li><button class="flex h-[76px] w-full items-center gap-[13px] pl-[24px]"><svg class="size-[42px] fill-white"><use href="#i-shield"/></svg>Encrypted data</button></li>
                                            <li><button class="flex h-[76px] w-full items-center gap-[13px] pl-[24px]"><svg class="size-[42px] fill-white"><use href="#i-copy"/></svg>Duplicate</button></li>
                                            <li><button class="flex h-[76px] w-full items-center gap-[13px] pl-[24px] text-[#dd4a5c]"><svg class="size-[42px] fill-[#dd4a5c]"><use href="#i-clean"/></svg>Clear Cache</button></li>
                                            <li><button class="flex h-[76px] w-full items-center gap-[13px] pl-[24px]"><svg class="size-[42px] shrink-0 fill-white"><use href="#i-restore"/></svg>Restore from backup</button></li>
                                            <li class="relative">
                                                <button class="flex h-[76px] w-full items-center gap-[13px] rounded-[18px] bg-[#27262b] pl-[24px]"><svg class="size-[42px] fill-white text-white"><use href="#i-cookie"/></svg>Export cookies</button>
                                                <span class="pointer-events-none absolute -top-[10px] -right-[20px] -bottom-[9px] -left-[12px] border-[5px] border-[#fb0007]"></span>
                                                <svg class="pointer-events-none absolute top-[14px] left-[426px] h-[26px] w-[436px]" viewBox="0 0 436 26"><path d="M30 13 435 18" stroke="#fb0007" stroke-width="5"/><path d="M0 12 36 0v25z" fill="#fb0007"/></svg>
                                            </li>
                                            <li><button class="flex h-[76px] w-full items-center gap-[13px] pl-[24px]"><svg class="size-[42px] fill-white"><use href="#i-robot"/></svg>Cookie Robot</button></li>
                                            <li><button class="flex h-[76px] w-full items-center gap-[13px] pl-[24px] text-[#dd4a5c]"><svg class="size-[42px] fill-[#dd4a5c]"><use href="#i-trash"/></svg>Delete</button></li>
                                        </ul>
                                    </div>
                                </td>
                                <td class="px-[15px]">
                                    <div>13.05.2026</div>
                                    <div class="mt-[3px] text-[#a5a5a8]">18:04:59</div>
                                </td>
                                <td class="px-[16px] pt-[12px]">
                                    <div class="flex gap-[38px] pl-[10px]">
                                        <button aria-label="Check proxy"><svg class="size-[42px] fill-[#bdbdc0]"><use href="#i-refresh"/></svg></button>
                                        <button aria-label="Add proxy"><svg class="size-[42px] fill-[#bdbdc0]"><use href="#i-plus"/></svg></button>
                                    </div>
                                    <div class="mt-[14px] flex items-center">
                                        <span class="flex h-[42px] w-[134px] items-center gap-[12px] rounded-[16px] bg-[#1b1a1f] pl-[16px] text-[24px] text-[#79dd98]"><span class="size-[21px] rounded-full bg-[#79dd98]"></span>active</span>
                                        <svg class="ml-[17px] h-[32px] w-[44px] rounded-[6px]" viewBox="0 0 44 32"><path fill="#5797f2" d="M0 0h44v16H0z"/><path fill="#f9de57" d="M0 16h44v16H0z"/></svg>
                                        <svg id="maskedIp" class="ml-[11px] h-[50px] w-[204px]" viewBox="0 0 22 5" preserveAspectRatio="none" shape-rendering="crispEdges"></svg>
                                    </div>
                                </td>
                                <td class="px-[15px]">26</td>
                                <td class="px-[32px]"><button aria-label="Note" class="block"><svg class="size-[42px] fill-[#bdbdc0]"><use href="#i-clipboard"/></svg></button></td>
                                <td class="px-[15px]"><span class="flex h-[51px] w-fit items-center rounded-[12px] border-2 border-[#2f4378] px-[13px] text-[#3d59a6]">test1</span></td>
                                <td class="px-[24px]"><button aria-label="Add tag" class="block"><svg class="size-[42px] fill-[#bdbdc0]"><use href="#i-plus"/></svg></button></td>
                            </tr>
                        </tbody>
                    </table>
                </div>

                <!-- Horizontal scrollbar -->
                <div class="mb-[2px] grid grid-cols-[2245fr_977fr] pl-[3px]"><span class="h-[17px] rounded-full bg-[#333438]"></span></div>
            </section>

            <footer class="flex h-[220px] items-start justify-end pt-[52px] pr-[41px]">
                <div class="flex h-[77px] items-center">
                    <span class="text-[26px] text-[#a5a5a8]">1–1 of 1</span>
                    <button disabled aria-label="Previous page" class="ml-[15px] flex w-[76px] justify-center"><svg class="size-[42px] fill-[#47474b]"><use href="#i-left"/></svg></button>
                    <input type="text" value="100" aria-label="Rows per page" class="mx-[17px] h-[77px] w-[177px] rounded-[18px] border-2 border-[#2a2a2e] bg-[#131216] text-center">
                    <button disabled aria-label="Next page" class="flex w-[76px] justify-center"><svg class="size-[42px] fill-[#47474b]"><use href="#i-right"/></svg></button>
                </div>
            </footer>
        </main>
    </div>

    <script>
        // Pixelated block that hides the proxy address
        const shades = ['#000000', '#0d0d0f', '#1c1c1f', '#2a2a2d', '#39393c', '#4a4a4d'];
        const rows = [
            '0112250212521120015000',
            '4002112420202101242120',
            '0035020020102100423023',
            '3324100101001021010213',
            '1051001030250210200313'
        ];
        document.getElementById('maskedIp').innerHTML = rows.map((row, y) =>
            [...row].map((s, x) => `<rect x="${x}" y="${y}" width="1" height="1" fill="${shades[s]}"/>`).join('')
        ).join('');
    </script>
</body>
</html>
